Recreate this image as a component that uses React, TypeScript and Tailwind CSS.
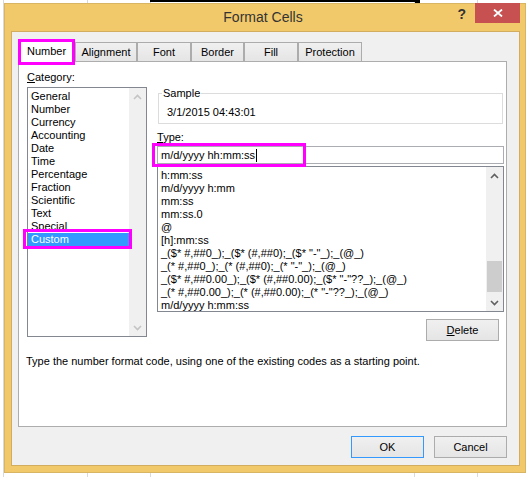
const categories = [
  'General',
  'Number',
  'Currency',
  'Accounting',
  'Date',
  'Time',
  'Percentage',
  'Fraction',
  'Scientific',
  'Text',
  'Special',
  'Custom',
];

const formats = [
  'h:mm:ss',
  'm/d/yyyy h:mm',
  'mm:ss',
  'mm:ss.0',
  '@',
  '[h]:mm:ss',
  '_($* #,##0_);_($* (#,##0);_($* "-"_);_(@_)',
  '_(* #,##0_);_(* (#,##0);_(* "-"_);_(@_)',
  '_($* #,##0.00_);_($* (#,##0.00);_($* "-"??_);_(@_)',
  '_(* #,##0.00_);_(* (#,##0.00);_(* "-"??_);_(@_)',
  'm/d/yyyy h:mm:ss',
];

const tabs = [
  { label: 'Alignment', width: 'w-[62px]' },
  { label: 'Font', width: 'w-[54px]' },
  { label: 'Border', width: 'w-[53px]' },
  { label: 'Fill', width: 'w-[54px]' },
  { label: 'Protection', width: 'w-[64px]' },
];

function Chevron({ up, color }: { up?: boolean; color: string }) {
  return (
    <svg width="9" height="6" viewBox="0 0 9 6">
      <path
        d={up ? 'M1 5L4.5 1.5L8 5' : 'M1 1L4.5 4.5L8 1'}
        fill="none"
        stroke={color}
        strokeWidth="1.6"
      />
    </svg>
  );
}

function Scrollbar({ thumb, color }: { thumb?: boolean; color: string }) {
  return (
    <div className="flex w-[17px] shrink-0 flex-col bg-[#f0f0f0]">
      <div className="flex h-[17px] items-center justify-center">
        <Chevron up color={color} />
      </div>
      <div className="flex flex-1 flex-col justify-end px-px">
        {thumb ? <div className="mb-[2px] h-[31px] bg-[#cdcdcd]" /> : null}
      </div>
      <div className="flex h-[17px] items-center justify-center">
        <Chevron color={color} />
      </div>
    </div>
  );
}

export default function App() {
  return (
    <div className="relative h-[477px] w-[527px] overflow-hidden bg-white font-['Liberation_Sans',Arial,sans-serif] text-[11px] text-black">
      {/* worksheet behind the dialog */}
      <div className="absolute left-[3px] top-0 h-full w-px bg-[#d9d9d9]" />
      <div className="absolute left-[87px] top-0 h-full w-px bg-[#d9d9d9]" />
      <div className="absolute left-[150px] top-0 h-full w-px bg-[#d9d9d9]" />
      <div className="absolute left-[414px] top-0 h-full w-px bg-[#d9d9d9]" />
      <div className="absolute left-[477px] top-0 h-full w-px bg-[#d9d9d9]" />
      <div className="absolute left-[150px] top-0 h-[2px] w-[266px] bg-black" />
      <div className="absolute left-[415px] top-0 h-[3px] w-[5px] bg-black" />

      <div className="absolute left-[4px] top-[3px] flex h-[470px] w-[522px] flex-col border border-[#d8b465] bg-[#f1c96b]">
        <div className="relative flex h-[27px] shrink-0 items-center justify-center pr-[4px] text-[14px] text-[#333]">
          Format Cells
          <span className="absolute right-[59px] top-[2px] text-[14px] font-bold leading-[16px] text-[#333]">
            ?
          </span>
          <div className="absolute -top-px right-[5px] flex h-[20px] w-[45px] items-center justify-center bg-[#c75050]">
            <svg width="10" height="8" viewBox="0 0 10 8">
              <path d="M1 0.5L9 7.5M9 0.5L1 7.5" stroke="white" strokeWidth="1.8" />
            </svg>
          </div>
        </div>

        <div className="mb-[6px] ml-[6px] mr-[5px] flex flex-1 flex-col border border-[#d2ad5f] bg-[#f0f0f0] pl-[6px] pr-[12px] pt-[8px]">
          <div className="flex h-[21px] items-end">
            <div className="relative z-10 -mb-px flex h-[22px] w-[57px] items-center justify-center border border-b-0 border-[#acacac] bg-white">
              Number
              <div className="pointer-events-none absolute -bottom-[3px] -left-px -right-px -top-[2px] border-[3px] border-[#ff00ff]" />
            </div>
            {tabs.map((tab) => (
              <div
                key={tab.label}
                className={`flex h-[19px] ${tab.width} items-center justify-center border border-b-0 border-[#acacac] bg-gradient-to-b from-[#f0f0f0] to-[#e5e5e5]`}
              >
                {tab.label}
              </div>
            ))}
          </div>

          <div className="flex h-[366px] flex-col border border-[#adadad] bg-white">
            <div className="flex pl-[8px]">
              <div className="w-[120px] shrink-0 pt-[8px]">
                <div className="leading-[15px]">
                  <span className="underline">C</span>ategory:
                </div>
                <div className="mt-[2px] flex h-[250px] border border-[#828790]">
                  <div className="flex-1 pt-[2px]">
                    {categories.map((name) =>
                      name === 'Custom' ? (
                        <div
                          key={name}
                          className="relative h-[13px] bg-[#3399ff] pl-[3px] leading-[13px] text-white"
                        >
                          {name}
                          <div className="pointer-events-none absolute -bottom-[3px] -left-[5px] -right-[3px] -top-[4px] border-[3px] border-[#ff00ff]" />
                        </div>
                      ) : (
                        <div key={name} className="h-[13px] pl-[3px] leading-[13px]">
                          {name}
                        </div>
                      ),
                    )}
                  </div>
                  <Scrollbar color="#c4c4c4" />
                </div>
              </div>

              <div className="ml-[10px] w-[347px] shrink-0">
                <div className="relative mx-px mt-[31px] h-[31px] border border-[#dcdcdc] pl-[8px] pt-[11px]">
                  <span className="absolute -top-[8px] left-[3px] bg-white px-px leading-[15px]">
                    Sample
                  </span>
                  <div className="leading-[15px]">3/1/2015 04:43:01</div>
                </div>

                <div className="mt-[6px] leading-[15px]">
                  <span className="underline">T</span>ype:
                </div>
                <div className="relative mt-px flex h-[18px] items-center border border-[#abadb3] pl-[3px]">
                  m/d/yyyy hh:mm:ss
                  <span className="ml-px h-[13px] w-px bg-black" />
                  <div className="pointer-events-none absolute -left-[6px] -top-[4px] h-[24px] w-[154px] border-[3px] border-[#ff00ff]" />
                </div>

                <div className="mt-[2px] flex h-[146px] border border-[#828790]">
                  <div className="min-w-0 flex-1 overflow-hidden pt-[2px]">
                    {formats.map((code) => (
                      <div key={code} className="h-[13px] whitespace-nowrap pl-[3px] leading-[13px]">
                        {code}
                      </div>
                    ))}
                  </div>
                  <Scrollbar thumb color="#606060" />
                </div>

                <div className="mt-[7px] flex justify-end pr-[5px]">
                  <div className="flex h-[22px] w-[73px] items-center justify-center border border-[#acacac] bg-gradient-to-b from-[#f0f0f0] to-[#e5e5e5]">
                    <span className="underline">D</span>elete
                  </div>
                </div>
              </div>
            </div>

            <div className="mt-[13px] pl-[7px] leading-[15px]">
              Type the number format code, using one of the existing codes as a starting point.
            </div>
          </div>

          <div className="mt-[9px] flex justify-end gap-[10px]">
            <div className="flex h-[22px] w-[73px] items-center justify-center border border-[#3399ff] bg-gradient-to-b from-[#f0f0f0] to-[#e5e5e5]">
              OK
            </div>
            <div className="flex h-[22px] w-[73px] items-center justify-center border border-[#acacac] bg-gradient-to-b from-[#f0f0f0] to-[#e5e5e5]">
              Cancel
            </div>
          </div>
        </div>
      </div>
    </div>
  );
}
